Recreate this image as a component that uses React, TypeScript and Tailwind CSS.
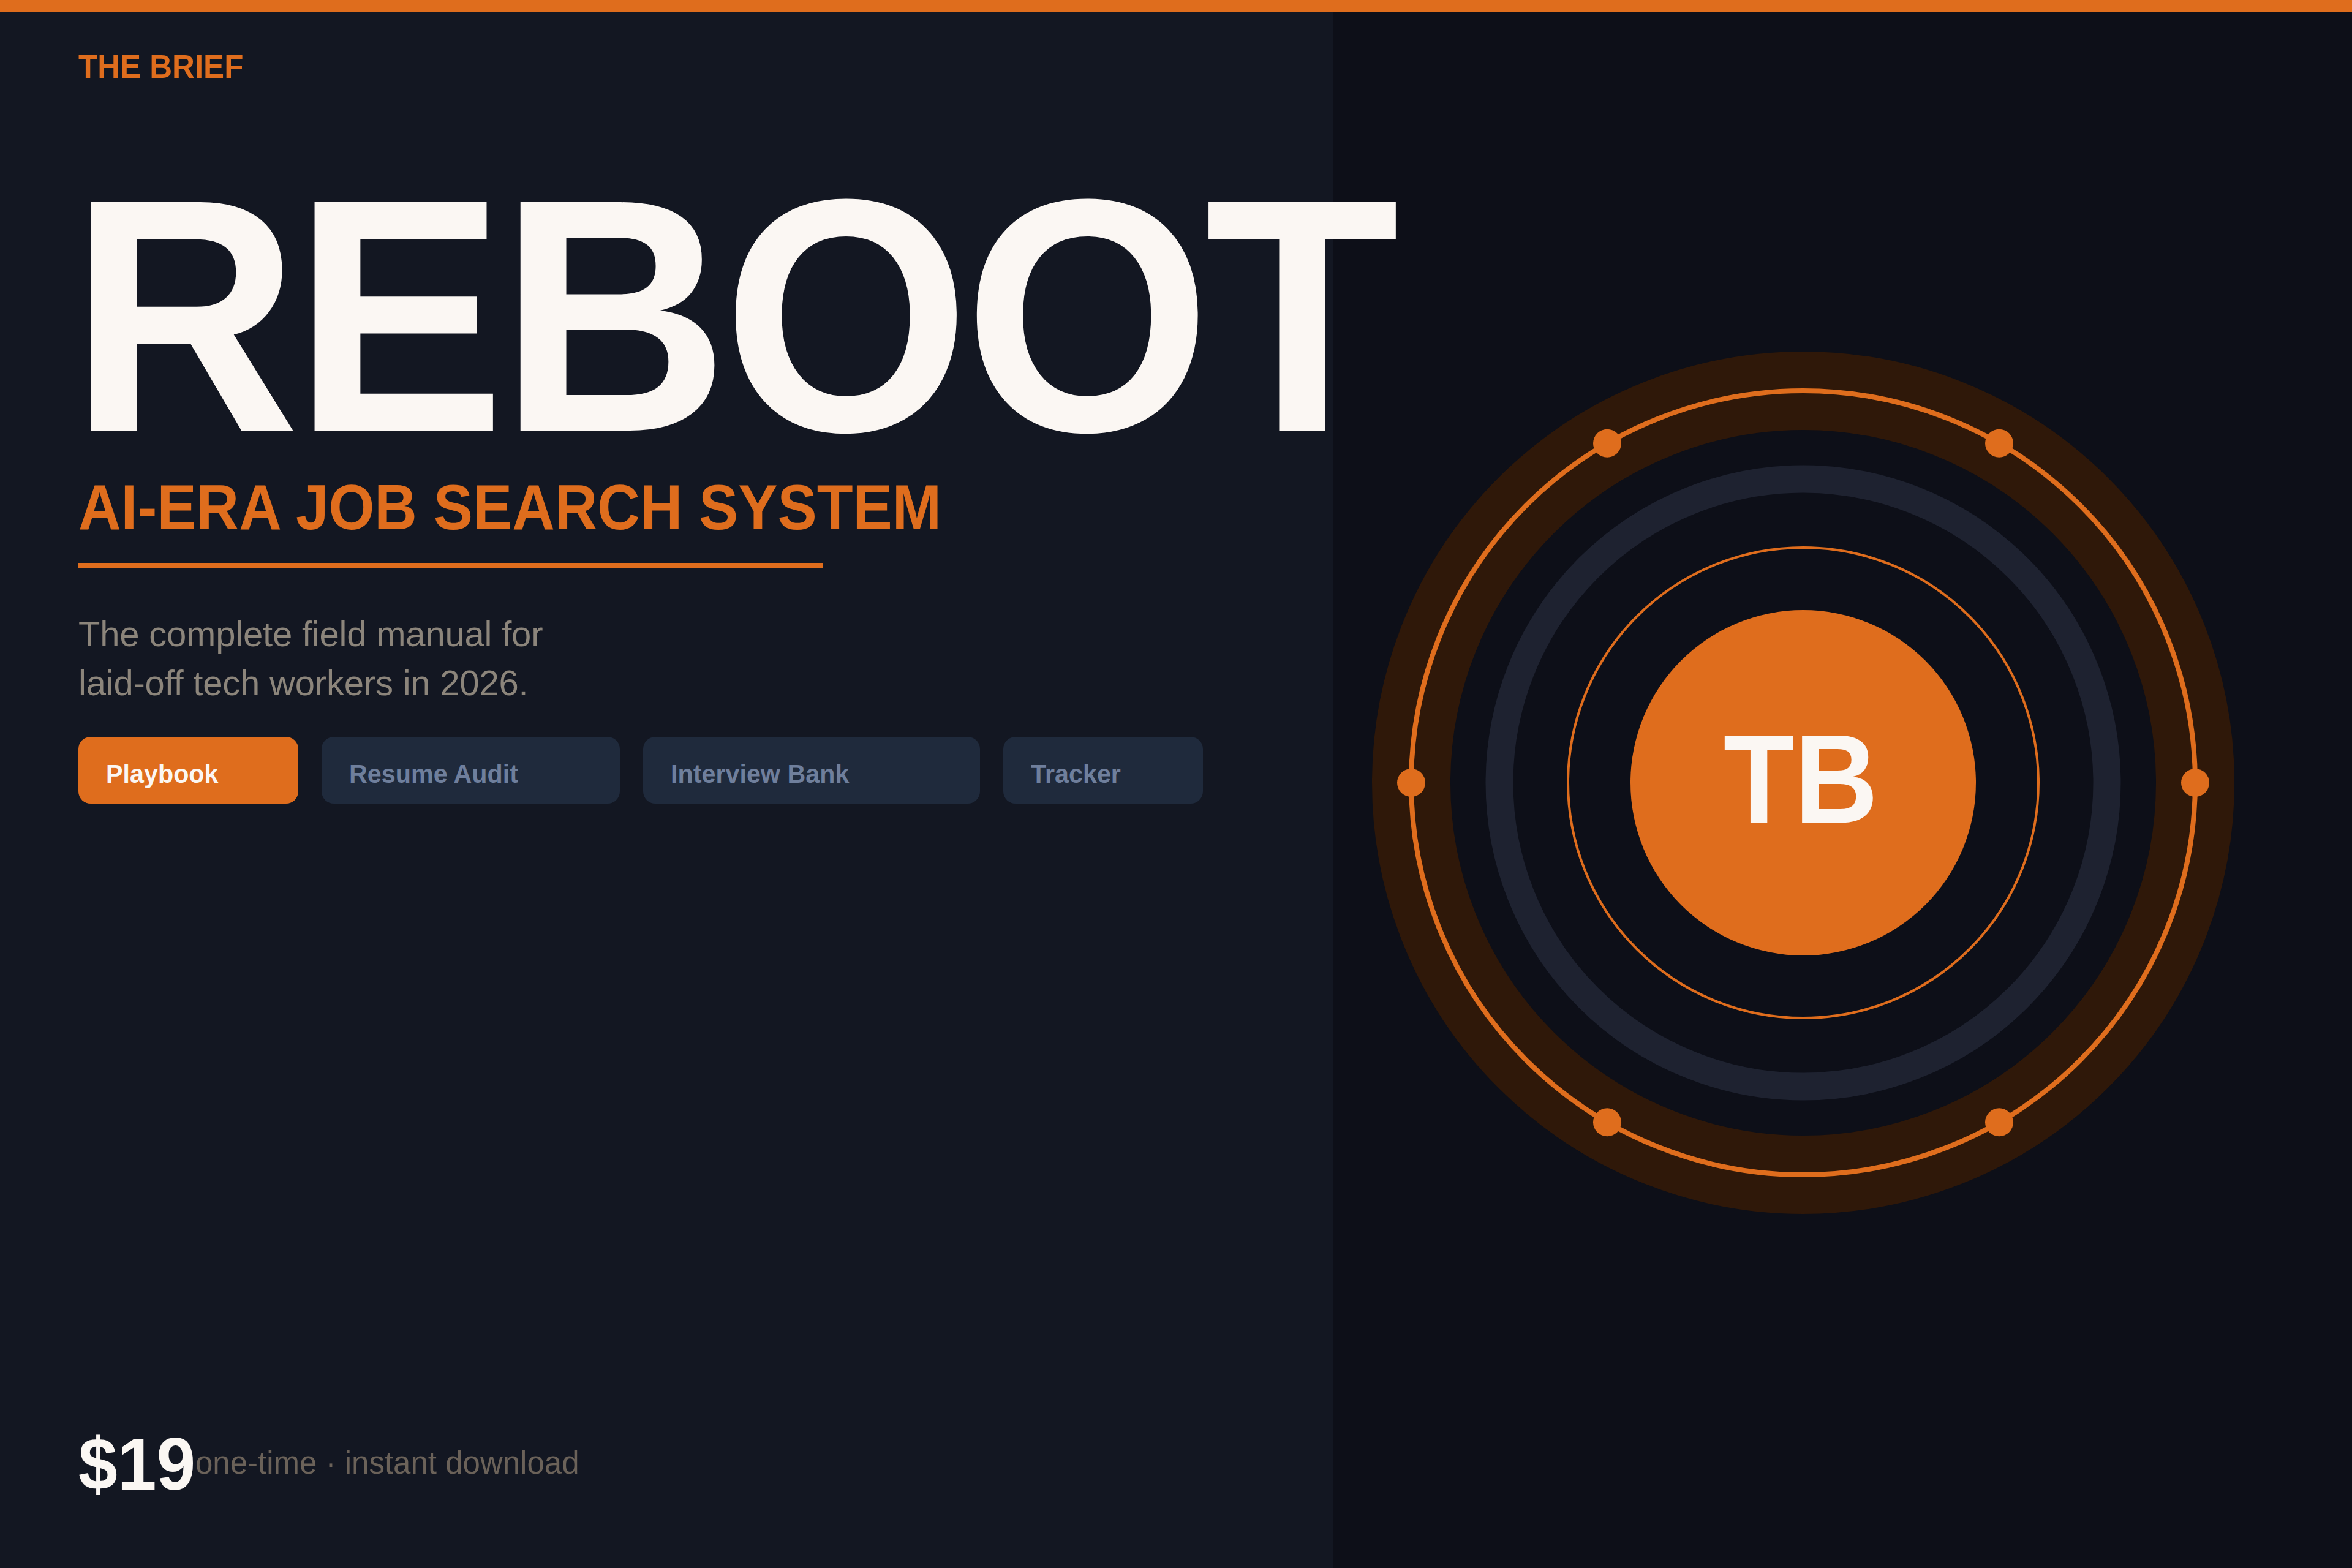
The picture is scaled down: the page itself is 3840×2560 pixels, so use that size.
import React from 'react';

const tabs = [
  { label: 'Playbook', width: 'w-[359px]', active: true },
  { label: 'Resume Audit', width: 'w-[487px]', active: false },
  { label: 'Interview Bank', width: 'w-[550px]', active: false },
  { label: 'Tracker', width: 'w-[326px]', active: false },
];

// six dots sit on the outer ring, every 60 degrees
const dots = [0, 60, 120, 180, 240, 300].map((deg) => ({
  cx: 704 + 640 * Math.cos((deg * Math.PI) / 180),
  cy: 704 + 640 * Math.sin((deg * Math.PI) / 180),
}));

const Emblem = () => (
  <svg width="1408" height="1408" viewBox="0 0 1408 1408" fill="none">
    <circle cx="704" cy="704" r="640" stroke="#2f1809" strokeWidth="128" />
    <circle cx="704" cy="704" r="640" stroke="#df6d1d" strokeWidth="8" />
    <circle cx="704" cy="704" r="496" stroke="#1e2230" strokeWidth="45" />
    <circle cx="704" cy="704" r="384" stroke="#df6d1d" strokeWidth="4" />
    <circle cx="704" cy="704" r="282" fill="#df6d1d" />
    {dots.map((d, i) => (
      <circle key={i} cx={d.cx} cy={d.cy} r="23" fill="#df6d1d" />
    ))}
    <text
      transform="translate(700 769) scale(0.92 1)"
      textAnchor="middle"
      fill="#fbf7f3"
      fontFamily="'Liberation Sans', Arial, sans-serif"
      fontWeight="700"
      fontSize="206"
    >
      TB
    </text>
  </svg>
);

export default function App() {
  return (
    <div className="flex h-[2560px] w-[3840px] flex-col overflow-hidden bg-[#0d0f18] font-['Liberation_Sans',Arial,sans-serif]">
      <div className="h-5 bg-[#df6d1d]" />
      <div className="flex flex-1">
        <div className="relative z-10 flex w-[2177px] flex-col bg-[#131722] pl-32">
          <div className="mt-[61px] origin-left scale-x-[0.945] text-[54px] leading-none font-bold text-[#df6d1d]">
            THE BRIEF
          </div>
          <h1 className="mt-[109px] -ml-[14px] origin-left scale-x-[0.958] text-[542px] leading-none font-bold tracking-[-10.6px] whitespace-nowrap text-[#fbf7f3]">
            REBOOT
          </h1>
          <div className="-mt-[9px] origin-left scale-x-[0.935] text-[103px] leading-none font-bold whitespace-nowrap text-[#df6d1d]">
            AI-ERA JOB SEARCH SYSTEM
          </div>
          <div className="mt-[39px] h-2 w-[1215px] bg-[#df6d1d]" />
          <p className="mt-[68px] text-[58px] leading-[80px] tracking-[-0.2px] text-[#8c857b]">
            The complete field manual for
            <br />
            laid-off tech workers in 2026.
          </p>
          <div className="mt-[48px] flex gap-[38px]">
            {tabs.map((tab) => (
              <div
                key={tab.label}
                className={`${tab.width} h-[109px] rounded-[20px] pt-[6px] pl-[45px] text-[43px] leading-[109px] font-bold ${
                  tab.active ? 'bg-[#df6d1d] text-[#fbf7f3]' : 'bg-[#1f2a3c] text-[#6f7f9c]'
                }`}
              >
                <span className="inline-block origin-left scale-x-[0.96]">{tab.label}</span>
              </div>
            ))}
          </div>
          <div className="mt-auto mb-[110px] flex items-center">
            <span className="w-[191px] shrink-0 origin-left scale-x-[0.955] text-[120px] leading-none font-bold text-[#fbf7f3]">
              $19
            </span>
            <span className="mb-[3px] text-[51px] leading-none text-[#6b6259]">one-time · instant download</span>
          </div>
        </div>
        <div className="flex-1 pt-[554px] pl-[63px]">
          <Emblem />
        </div>
      </div>
    </div>
  );
}
